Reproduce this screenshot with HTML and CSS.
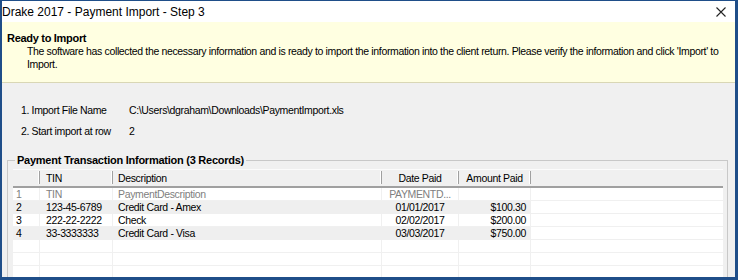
FILE: index.html
```html
<!DOCTYPE html>
<html>
<head>
<meta charset="utf-8">
<link rel="stylesheet" href="styles.css">
</head>
<body>
<div class="window">
  <div class="titlebar">
    <span class="title">Drake 2017 - Payment Import - Step 3</span>
    <svg class="close" width="10" height="10" viewBox="0 0 10 10"><path d="M0.5 0.5 L9.5 9.5 M9.5 0.5 L0.5 9.5" stroke="#222" stroke-width="1.1" fill="none"/></svg>
  </div>
  <div class="banner">
    <div class="banner-title">Ready to Import</div>
    <div class="banner-text">The software has collected the necessary information and is ready to import the information into the client return. Please verify the information and click 'Import' to Import.</div>
  </div>
  <div class="body">
    <div class="info">
      <div class="info-row"><span class="info-label">1. Import File Name</span><span>C:\Users\dgraham\Downloads\PaymentImport.xls</span></div>
      <div class="info-row"><span class="info-label">2. Start import at row</span><span>2</span></div>
    </div>
    <div class="group">
      <div class="group-title">Payment Transaction Information (3 Records)</div>
      <div class="grid">
        <div class="row head">
          <div class="c c0"></div>
          <div class="c c1">TIN</div>
          <div class="c c2">Description</div>
          <div class="c c3 center">Date Paid</div>
          <div class="c c4 center">Amount Paid</div>
          <div class="c c5"></div>
        </div>
        <div class="row muted">
          <div class="c c0">1</div><div class="c c1">TIN</div><div class="c c2">PaymentDescription</div><div class="c c3 center">PAYMENTD...</div><div class="c c4"></div><div class="c c5"></div>
        </div>
        <div class="row alt">
          <div class="c c0">2</div><div class="c c1">123-45-6789</div><div class="c c2">Credit Card - Amex</div><div class="c c3 center">01/01/2017</div><div class="c c4 right">$100.30</div><div class="c c5"></div>
        </div>
        <div class="row">
          <div class="c c0">3</div><div class="c c1">222-22-2222</div><div class="c c2">Check</div><div class="c c3 center">02/02/2017</div><div class="c c4 right">$200.00</div><div class="c c5"></div>
        </div>
        <div class="row alt">
          <div class="c c0">4</div><div class="c c1">33-3333333</div><div class="c c2">Credit Card - Visa</div><div class="c c3 center">03/03/2017</div><div class="c c4 right">$750.00</div><div class="c c5"></div>
        </div>
        <div class="row empty"><div class="c c0"></div><div class="c c1"></div><div class="c c2"></div><div class="c c3"></div><div class="c c4"></div><div class="c c5"></div></div>
        <div class="row empty"><div class="c c0"></div><div class="c c1"></div><div class="c c2"></div><div class="c c3"></div><div class="c c4"></div><div class="c c5"></div></div>
        <div class="row empty"><div class="c c0"></div><div class="c c1"></div><div class="c c2"></div><div class="c c3"></div><div class="c c4"></div><div class="c c5"></div></div>
      </div>
    </div>
  </div>
</div>
</body>
</html>
```
FILE: styles.css
```css
html, body { margin: 0; padding: 0; }
body {
  width: 738px;
  height: 280px;
  overflow: hidden;
  font-family: "Liberation Sans", Arial, sans-serif;
  font-size: 10.5px;
  letter-spacing: -0.35px;
  color: #000;
}
.window {
  box-sizing: border-box;
  width: 738px;
  height: 280px;
  border-style: solid;
  border-color: #1f4e89;
  border-width: 1px 3px 3px 2px;
  background: #f0f0f0;
  display: flex;
  flex-direction: column;
  overflow: hidden;
}
.titlebar {
  height: 21px;
  background: #fff;
  display: flex;
  align-items: center;
  justify-content: space-between;
  padding: 0 9px 0 0;
  flex: none;
}
.title {
  font-size: 12px;
  letter-spacing: 0;
  color: #000;
}
.close { display: block; }
.banner {
  height: 61px;
  box-sizing: border-box;
  background: #ffffe1;
  border-bottom: 1px solid #d9d7b5;
  padding: 9px 0 0 5px;
  flex: none;
}
.banner-title {
  font-weight: bold;
  font-size: 11px;
  letter-spacing: -0.3px;
  line-height: 14px;
}
.banner-text {
  padding-left: 20px;
  padding-right: 8px;
  line-height: 13px;
}
.body {
  flex: 1;
  padding: 16px 0 0 5px;
}
.info { padding-left: 14px; }
.info-row {
  display: flex;
  height: 21px;
  align-items: center;
}
.info-label { width: 108px; }
.group {
  margin-top: 19px;
  width: 721px;
  height: 140px;
  box-sizing: border-box;
  border: 1px solid #c8c8c8;
  padding: 8px 4px 0 5px;
  position: relative;
}
.group-title {
  position: absolute;
  top: -8px;
  left: 7px;
  background: #f0f0f0;
  padding: 0 2px;
  font-weight: bold;
  font-size: 11px;
  letter-spacing: -0.25px;
  line-height: 14px;
}
.grid {
  width: 710px;
  background: #fff;
}
.row {
  display: flex;
  height: 13px;
  line-height: 13px;
}
.row.head {
  height: 16px;
  line-height: 14px;
  background: #f0f0f0;
  border-top: 1px solid #fbfbfb;
  border-bottom: 2px solid #a0a0a0;
}
.c {
  box-sizing: border-box;
  white-space: nowrap;
  overflow: hidden;
  padding: 0 3px;
  border-right: 1px solid #f0f0f0;
  border-bottom: 1px solid #f0f0f0;
}
.head .c {
  border-bottom: none;
  border-right: 1px solid #a0a0a0;
  box-shadow: inset -1px 0 0 #fff;
  height: 13px;
  margin-top: 1px;
  padding: 0 6px;
}
.head .c5 { border-right: none; box-shadow: none; }
.c0 { width: 27px; }
.c1 { width: 73px; }
.c2 { width: 269px; }
.c3 { width: 77px; }
.c4 { width: 72px; }
.c5 { flex: 1; border-right: none; }
.head .c1, .head .c2 { padding-left: 6px; }
.row .c1 { padding-left: 6px; }
.row .c2 { padding-left: 5px; }
.center { text-align: center; }
.right { text-align: right; padding-right: 4px; }
.muted { color: #808080; }
.alt .c0, .alt .c1, .alt .c2, .alt .c3, .alt .c4 { background: #efefef; }
.alt .c { border-color: #efefef; }
```
